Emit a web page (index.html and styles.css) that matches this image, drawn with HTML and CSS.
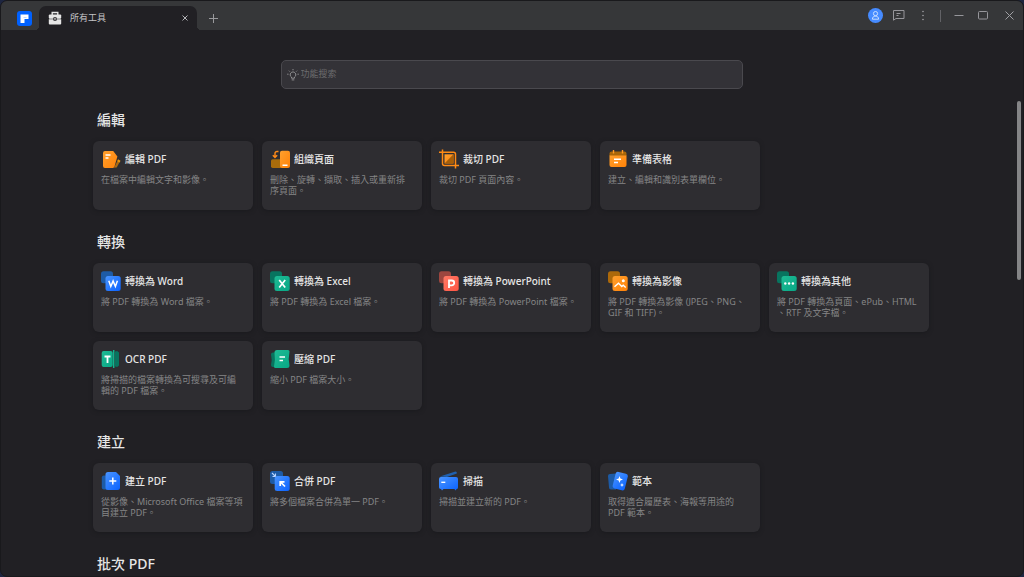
FILE: index.html
```html
<!DOCTYPE html>
<html lang="zh-Hant">
<head>
<meta charset="utf-8">
<meta name="viewport" content="width=device-width, initial-scale=1">
<title>所有工具</title>
<link rel="stylesheet" href="styles.css">
</head>
<body>
<svg class="defs" aria-hidden="true">
  <defs>
    <linearGradient id="orange" x1="0" y1="0" x2="1" y2="1"><stop offset="0" stop-color="#ffa02e"/><stop offset="1" stop-color="#ff8208"/></linearGradient>
    <linearGradient id="blue" x1="0" y1="0" x2="1" y2="1"><stop offset="0" stop-color="#4a95ff"/><stop offset="1" stop-color="#0a62ff"/></linearGradient>
    <linearGradient id="green" x1="0" y1="0" x2="1" y2="1"><stop offset="0" stop-color="#1fba94"/><stop offset="1" stop-color="#08a886"/></linearGradient>
    <linearGradient id="red" x1="0" y1="0" x2="1" y2="1"><stop offset="0" stop-color="#ff7a66"/><stop offset="1" stop-color="#ff5443"/></linearGradient>
  </defs>
</svg>
<div class="window">
  <header class="titlebar">
    <button class="home" aria-label="首頁">
      <svg width="15" height="15" viewBox="0 0 15 15"><rect width="15" height="15" rx="3" fill="#0061ff"/><path d="M3.500 3.500h8v4.500H7.500v4h-4z" fill="#fff"/><path d="M6.500 6.500h3" stroke="#a9c9ff" stroke-width=".7"/></svg>
    </button>
    <div class="tab">
      <svg width="14" height="14" viewBox="0 0 14 14"><path d="M4.200 4V1.500h5.600V4" fill="none" stroke="#e6e6e6" stroke-width="1.400"/><rect x=".8" y="3.500" width="12.400" height="4.200" rx="1" fill="#e6e6e6"/><path d="M.8 8.300h12.400v4.200a1 1 0 0 1-1 1H1.800a1 1 0 0 1-1-1z" fill="#e6e6e6"/><rect x="5.300" y="6.200" width="3.400" height="3.600" rx=".8" fill="#212024"/><rect x="6.400" y="7" width="1.200" height="1.800" fill="#e6e6e6"/></svg>
      <span class="tab-name">所有工具</span>
      <button class="tab-close" aria-label="關閉分頁"><svg width="6" height="6" viewBox="0 0 6 6"><path d="M.5.5l5 5m0-5l-5 5" stroke="#b5b5b8"/></svg></button>
    </div>
    <button class="new-tab" aria-label="新增分頁"><svg width="9" height="9" viewBox="0 0 9 9"><path d="M4.500 0v9M0 4.500h9" stroke="#99999c"/></svg></button>
    <div class="actions">
      <button aria-label="帳戶"><svg width="15" height="15" viewBox="0 0 15 15"><circle cx="7.500" cy="7.500" r="7.500" fill="#468bff"/><g fill="none" stroke="#d5e5ff" stroke-width=".9"><circle cx="7.500" cy="5.600" r="2.100"/><path d="M4.400 11.200c0-2 1.100-3 3.100-3s3.100 1 3.100 3z"/></g></svg></button>
      <button aria-label="意見回饋"><svg width="12" height="11" viewBox="0 0 12 11"><path d="M.5.500h10.500v8H3L.5 10.200z" fill="none" stroke="#96969b"/><path d="M3.500 3.500h4M3.500 5.500h2" stroke="#96969b"/></svg></button>
      <button aria-label="更多"><svg width="4" height="11" viewBox="0 0 4 11"><g fill="#a0a0a4"><circle cx="2" cy="1.500" r=".8"/><circle cx="2" cy="5.500" r=".8"/><circle cx="2" cy="9.500" r=".8"/></g></svg></button>
      <span class="divider"></span>
      <button aria-label="最小化"><svg width="10" height="9" viewBox="0 0 10 9"><path d="M.5 4.500h9" stroke="#96969b"/></svg></button>
      <button aria-label="最大化"><svg width="10" height="9" viewBox="0 0 10 9"><rect x=".5" y=".5" width="9" height="7.500" rx="1" fill="none" stroke="#96969b"/></svg></button>
      <button class="close" aria-label="關閉"><svg width="9" height="9" viewBox="0 0 9 9"><path d="M.5.500l8 8m0-8l-8 8" stroke="#a0a0a4"/></svg></button>
    </div>
  </header>

  <main class="page">
    <label class="search">
      <svg width="12" height="12" viewBox="0 0 12 12"><g fill="none" stroke="#99999b" stroke-width=".9"><path d="M4.500 9.200V8.100a2.800 2.800 0 1 1 3 0v1.100zM4.700 10.900h2.600M6 0v1.300M1.900 1.700l.9.900M10.100 1.700l-.9.900M.2 5.200h1.300M10.500 5.200h1.300"/></g></svg>
      <input type="text" placeholder="功能搜索" aria-label="功能搜索">
    </label>
    <div class="body">
      <div class="tools">
        <section>
          <h2>編輯</h2>
          <div class="grid">
            <article class="card">
              <h3><svg viewBox="0 0 20 20"><path d="M13 18.700l4.300-8.500 1.900 1.700-3.500 6.600z" fill="#ad6b10"/><path d="M17 10.500l2.500 1.300-.8 1.700-2.500-1.300z" fill="#e8950c"/><path d="M2 4a2 2 0 0 1 2-2h8.200l4.200 5.500-2.800 9.700a2 2 0 0 1-2 1.800H4a2 2 0 0 1-2-2z" fill="url(#orange)"/><path d="M4.500 6h5M4.500 9h3" stroke="#fff" stroke-width="1.300"/></svg>編輯 PDF</h3>
              <p>在檔案中編輯文字和影像。</p>
            </article>
            <article class="card">
              <h3><svg viewBox="0 0 20 20"><rect x="1" y="10.300" width="11" height="8.700" rx="1.700" fill="#a96c0b"/><path d="M8.500 2.500H7a2 2 0 0 0-2 2V8M2.800 6.300L5 8.500l2.200-2.200" fill="none" stroke="#ff8a18" stroke-width="1.400"/><rect x="10" y="1.800" width="10" height="17.200" rx="2" fill="url(#orange)"/><path d="M12.500 16.300h5" stroke="#fff" stroke-width="1.400"/></svg>組織頁面</h3>
              <p>刪除、旋轉、擷取、插入或重新排<br>序頁面。</p>
            </article>
            <article class="card">
              <h3><svg viewBox="0 0 20 20"><path d="M3.500.5v14a2 2 0 0 0 2 2H20M0 3.300h14.500a2 2 0 0 1 2 2v14.200" fill="none" stroke="#ff8a14" stroke-width="1.500"/><rect x="5.500" y="5.300" width="9" height="9.200" fill="url(#orange)"/><path d="M14.500 5.300v9.200h-9z" fill="#a85f08"/></svg>裁切 PDF</h3>
              <p>裁切 PDF 頁面內容。</p>
            </article>
            <article class="card">
              <h3><svg viewBox="0 0 20 20"><path d="M1.500 7V4.500a2 2 0 0 1 2-2h13a2 2 0 0 1 2 2V7z" fill="#a86609"/><path d="M1.500 6.500h17V16a2 2 0 0 1-2 2h-13a2 2 0 0 1-2-2z" fill="url(#orange)"/><path d="M5.500 1v3.500M14.500 1v3.500" stroke="#ff9a25" stroke-width="1.400"/><path d="M6 10.300h7M6 13.500h4" stroke="#fff" stroke-width="1.400"/></svg>準備表格</h3>
              <p>建立、編輯和識別表單欄位。</p>
            </article>
          </div>
        </section>

        <section>
          <h2>轉換</h2>
          <div class="grid">
            <article class="card">
              <h3><svg viewBox="0 0 20 20"><rect x="0" y=".3" width="12" height="12" rx="2.500" fill="#1d5ba6"/><rect x="4.500" y="5" width="15.200" height="15" rx="2.500" fill="url(#blue)"/><path d="M7.800 9.800l2 5.700 2.300-5.500 2.300 5.500 2-5.700" fill="none" stroke="#fff" stroke-width="1.500"/></svg>轉換為 Word</h3>
              <p>將 PDF 轉換為 Word 檔案。</p>
            </article>
            <article class="card">
              <h3><svg viewBox="0 0 20 20"><rect x="0" y=".3" width="12" height="12" rx="2.500" fill="#08745f"/><rect x="4.500" y="5" width="15.200" height="15" rx="2.500" fill="url(#green)"/><path d="M9.200 9l6 7.500m0-7.500l-6 7.500" stroke="#fff" stroke-width="1.700"/></svg>轉換為 Excel</h3>
              <p>將 PDF 轉換為 Excel 檔案。</p>
            </article>
            <article class="card">
              <h3><svg viewBox="0 0 20 20"><rect x="0" y=".3" width="12" height="12" rx="2.500" fill="#9d463f"/><rect x="4.500" y="5" width="15.200" height="15" rx="2.500" fill="url(#red)"/><path d="M10 17V9.500h2.800a2.400 2.400 0 0 1 0 4.800H10" fill="none" stroke="#fff" stroke-width="1.800"/></svg>轉換為 PowerPoint</h3>
              <p>將 PDF 轉換為 PowerPoint 檔案。</p>
            </article>
            <article class="card">
              <h3><svg viewBox="0 0 20 20"><rect x="0" y=".3" width="12" height="12" rx="2.500" fill="#ad690a"/><rect x="4.500" y="5" width="15.200" height="15" rx="2.500" fill="url(#orange)"/><path d="M6.500 15.800l4-3.600 3.300 3.300 1.400-1.200 2.500 2.200" fill="none" stroke="#fff" stroke-width="1.400"/><circle cx="15.300" cy="9.700" r="1.500" fill="#fff"/></svg>轉換為影像</h3>
              <p>將 PDF 轉換為影像 (JPEG、PNG、<br>GIF 和 TIFF)。</p>
            </article>
            <article class="card">
              <h3><svg viewBox="0 0 20 20"><rect x="0" y=".3" width="12" height="12" rx="2.500" fill="#08745f"/><rect x="4.500" y="5" width="15.200" height="15" rx="2.500" fill="url(#green)"/><g fill="#fff"><circle cx="8.300" cy="12.500" r="1.200"/><circle cx="12.100" cy="12.500" r="1.200"/><circle cx="15.900" cy="12.500" r="1.200"/></g></svg>轉換為其他</h3>
              <p>將 PDF 轉換為頁面、ePub、HTML<br>、RTF 及文字檔。</p>
            </article>
            <article class="card">
              <h3><svg viewBox="0 0 20 20"><path d="M14 2.500l2.200-.5 1.800 1.500v13L16.200 18l-2.200-.5z" fill="#08745f"/><rect x=".7" y="2" width="11" height="16" rx="2" fill="url(#green)"/><path d="M12.700 1v18" stroke="#12b38e" stroke-width="1.500"/><path d="M3.500 7.500h6M6.500 7.500V14" stroke="#fff" stroke-width="1.800"/></svg>OCR PDF</h3>
              <p>將掃描的檔案轉換為可搜尋及可編<br>輯的 PDF 檔案。</p>
            </article>
            <article class="card">
              <h3><svg viewBox="0 0 20 20"><path d="M1 5.500a2 2 0 0 1 2-2h4V18H3a2 2 0 0 1-2-2q1.400-5 0-10.500z" fill="#08745f"/><path d="M4.500 3.500A2.500 2.500 0 0 1 7 1h11q1.500 0 1.500 1.500-1.500 7 0 14Q19.500 19 17 19H5.500Q4 19 4 17.500q1.500-7 .5-14z" fill="url(#green)"/><path d="M9.500 8h5.500M9.500 11.500h3.500" stroke="#fff" stroke-width="1.300"/></svg>壓縮 PDF</h3>
              <p>縮小 PDF 檔案大小。</p>
            </article>
          </div>
        </section>

        <section>
          <h2>建立</h2>
          <div class="grid">
            <article class="card">
              <h3><svg viewBox="0 0 20 20"><rect x=".8" y="4.500" width="10" height="14" rx="2" fill="#1d5ba6"/><path d="M4.500 3.500a2.500 2.500 0 0 1 2.500-2.500h8l4 4v11.500a2.500 2.500 0 0 1-2.500 2.500H7a2.500 2.500 0 0 1-2.500-2.500z" fill="url(#blue)"/><path d="M11.800 6.500v7M8.300 10h7" stroke="#fff" stroke-width="1.500"/></svg>建立 PDF</h3>
              <p>從影像、Microsoft Office 檔案等項<br>目建立 PDF。</p>
            </article>
            <article class="card">
              <h3><svg viewBox="0 0 20 20"><rect x="0" y="0" width="13" height="13" rx="2.500" fill="#1d5ba6"/><path d="M2 2l3 3M5.500 2.500v3h-3" fill="none" stroke="#b8d4ff" stroke-width="1.100"/><rect x="4.700" y="5" width="15" height="15" rx="2.500" fill="url(#blue)"/><path d="M15 15.500l-4-4M10.200 15v-4.200h4.300" fill="none" stroke="#fff" stroke-width="1.700"/></svg>合併 PDF</h3>
              <p>將多個檔案合併為單一 PDF。</p>
            </article>
            <article class="card">
              <h3><svg viewBox="0 0 20 20"><path d="M.8 5.500L16.500.6q1.700 0 1.300 1.900L8 6z" fill="#2061b0"/><path d="M0 8a2 2 0 0 1 2-2h15a2 2 0 0 1 2 2v8.500a1.500 1.500 0 0 1-1.500 1.500l-.7 1.500-1.500-1.500H4.500L3 19.500 2 18a2 2 0 0 1-2-1.500z" fill="url(#blue)"/><path d="M2.300 11.300h4" stroke="#fff" stroke-width="1.400"/></svg>掃描</h3>
              <p>掃描並建立新的 PDF。</p>
            </article>
            <article class="card">
              <h3><svg viewBox="0 0 20 20"><path d="M0 5a2 2 0 0 1 2-2l6-.5v16L3 18.500a2 2 0 0 1-2-2z" fill="#1d5ba6"/><rect x="6" y="1.600" width="12.500" height="17" rx="2.500" transform="rotate(14 12.200 10)" fill="url(#blue)"/><path d="M11.500 5l.9 2.600 2.600.9-2.600.9-.9 2.600-.9-2.600L8 8.500l2.600-.9zM14 12l.6 1.400 1.400.6-1.400.6L14 16l-.6-1.400L12 14l1.400-.6z" fill="#fff"/></svg>範本</h3>
              <p>取得適合履歷表、海報等用途的<br>PDF 範本。</p>
            </article>
          </div>
        </section>

        <section>
          <h2>批次 PDF</h2>
        </section>
      </div>
      <div class="scrollbar"><div class="thumb"></div></div>
    </div>
  </main>
</div>
</body>
</html>
```
FILE: styles.css
```css
* {
  box-sizing: border-box;
}

body {
  margin: 0;
  background: #1d2540;
  color: #e6e6e6;
  font-family: "Noto Sans", "Noto Sans CJK TC", sans-serif;
  font-size: 9px;
}

button {
  display: grid;
  place-items: center;
  margin: 0;
  padding: 0;
  border: 0;
  background: none;
}

h2,
h3,
p {
  margin: 0;
}

svg {
  display: block;
  flex: none;
}

.defs {
  position: absolute;
  width: 0;
  height: 0;
}

.window {
  display: flex;
  flex-direction: column;
  height: 100vh;
  overflow: hidden;
  border: 1px solid #19191c;
  border-radius: 7px;
  background: #212024;
}

.titlebar {
  display: flex;
  flex: none;
  align-items: flex-end;
  height: 29px;
  background: #363739;
}

.home {
  width: 38px;
  height: 24px;
  padding-left: 8px;
}

.tab {
  position: relative;
  display: flex;
  align-items: center;
  width: 158px;
  height: 24px;
  padding: 0 9px;
  border-radius: 7px 7px 0 0;
  background: #212024;
}

.tab::before,
.tab::after {
  content: "";
  position: absolute;
  bottom: 0;
  width: 4px;
  height: 4px;
}

.tab::before {
  right: 100%;
  background: radial-gradient(circle at 0 0, transparent 4px, #212024 4px);
}

.tab::after {
  left: 100%;
  background: radial-gradient(circle at 100% 0, transparent 4px, #212024 4px);
}

.tab-name {
  flex: 1;
  padding: 0 0 2px 8px;
  color: #c4c4c6;
}

.new-tab {
  width: 33px;
  height: 24px;
}

.actions {
  display: flex;
  align-items: center;
  height: 29px;
  margin-left: auto;
}

.actions button {
  width: 24px;
  height: 100%;
}

.actions .close {
  width: 28px;
}

.divider {
  width: 1px;
  height: 12px;
  margin: 0 6px 0 5px;
  background: #626266;
}

.page {
  display: flex;
  flex: 1;
  flex-direction: column;
  min-height: 0;
}

.search {
  display: flex;
  flex: none;
  align-items: center;
  gap: 2px;
  width: 45.3%;
  height: 29px;
  margin: 30px auto 12px;
  padding: 0 5px;
  border: 1px solid #4a494e;
  border-radius: 5px;
  background: #333237;
}

.search input {
  flex: 1;
  min-width: 0;
  padding: 0 0 2px;
  border: 0;
  outline: 0;
  background: none;
  color: #e6e6e6;
  font: inherit;
}

.search input::placeholder {
  color: #6c6c6e;
  opacity: 1;
}

.body {
  display: flex;
  flex: 1;
  min-height: 0;
}

.tools {
  display: flex;
  flex: 1;
  flex-direction: column;
  gap: 22px;
  min-width: 0;
  padding: 9px 88px 0 92px;
  overflow: hidden;
}

h2 {
  padding-left: 4px;
  font-size: 14px;
  font-weight: 500;
  line-height: 20px;
}

.grid {
  display: grid;
  grid-template-columns: repeat(auto-fill, minmax(160px, 1fr));
  gap: 9px;
  margin-top: 11px;
}

.card {
  min-height: 69px;
  padding: 8px;
  border-radius: 6px;
  background: #2e2d31;
  box-shadow: 0 1px 4px #1a1a1d;
}

h3 {
  display: flex;
  align-items: center;
  gap: 4px;
  font-size: 10px;
  font-weight: 500;
  line-height: 20px;
  white-space: pre;
}

h3 svg {
  width: 20px;
  height: 20px;
}

p {
  margin-top: 5px;
  color: #858586;
  font-size: 9px;
  line-height: 11px;
  white-space: nowrap;
}

.scrollbar {
  flex: none;
  width: 4px;
  margin-right: 2px;
}

.thumb {
  height: 37.6%;
  border-radius: 2px;
  background: #858587;
}
```
